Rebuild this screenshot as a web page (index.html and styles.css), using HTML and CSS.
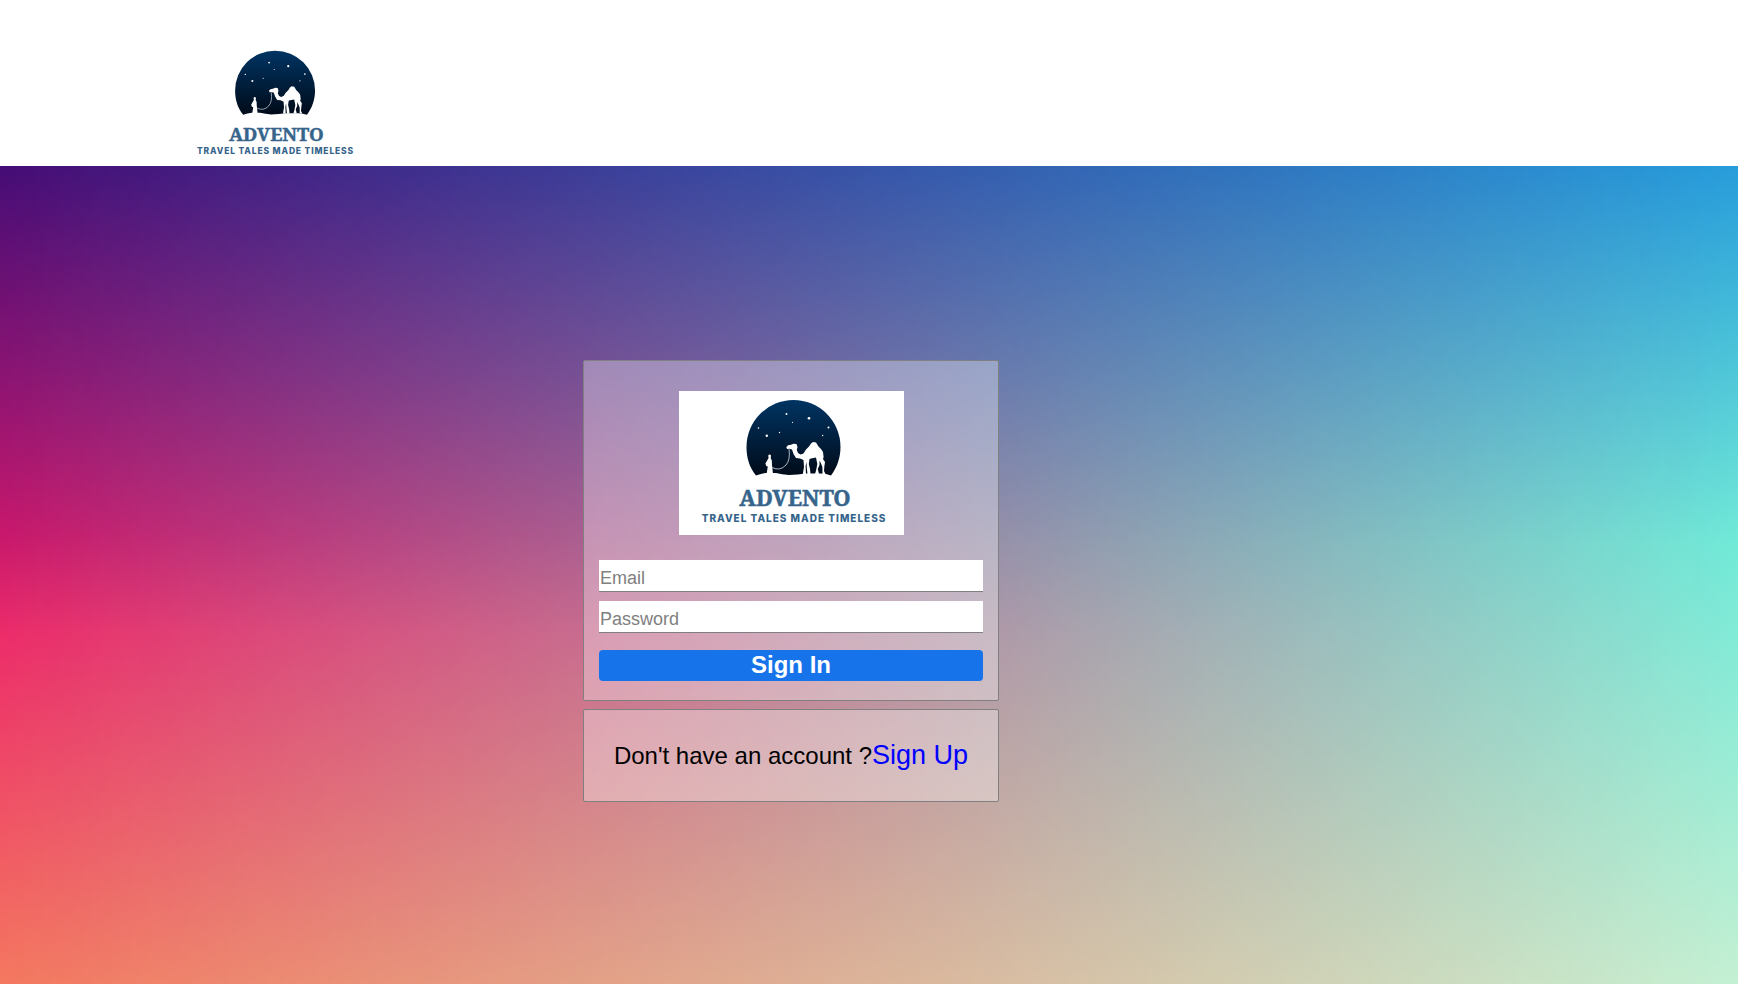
FILE: index.html
```
<!DOCTYPE html>
<html lang="en">
<head>
<meta charset="utf-8">
<meta name="viewport" content="width=device-width, initial-scale=1">
<title>Advento - Sign In</title>
<link rel="stylesheet" href="styles.css">
</head>
<body>
<svg class="defs" aria-hidden="true">
  <defs>
    <linearGradient id="night" x1="0" y1="0" x2="0" y2="1">
      <stop offset="0" stop-color="#003463"/>
      <stop offset="1" stop-color="#000b19"/>
    </linearGradient>
  </defs>
  <symbol id="advento-scene" viewBox="0 0 225 144">
    <path fill="url(#night)" d="M77 84.500C70 76 67.500 66 67.500 56a47 47 0 0 1 94 0C161.500 66 158.500 76 152 84.500Q147 82.500 142 82.500L127 82.500Q119 83.500 110 84Q103 83.500 97 82L87 82Q82 82.500 77 84.500Z"/>
    <g fill="#fff">
      <path d="M107.300 56.300L109 54.300L112 53.700L114.500 52.800L117.500 53L118.500 56L117.800 59L119 62L121.500 63.500L124.500 62.500L127 58.500L130 55.500L132 52.500L134 51L137 51.500L139.500 55.500L142 58L144 61L144.600 66L144 68L146 71L145.400 75L145 80L146.500 83L143.500 83L143.400 76L141.800 72L140.600 69.500L140.500 74L138.800 78L140 83L136 83L137.200 79L138.300 73L137 66.500L132 67.500L130.500 68L129.800 73L131 78L131.500 83L128.500 83L127.800 77L127.500 71L126.600 75L127 83L123.800 83L125 76L124.500 69L121 67.500L117 67L114.500 63L113 58.500L110.500 57.800L108 58Z"/>
      <path d="M89.200 64.500Q90.700 62.400 92 64.500L91.700 67L92.800 69.500L93 74L94 83H87.600L88.800 75.500L87.200 75L86.400 72.500L88 69.800L89.600 67Z"/>
      <circle cx="107.500" cy="23" r="1"/><circle cx="130" cy="27.300" r="1.300"/>
      <circle cx="113.500" cy="31.300" r=".6"/><circle cx="149.500" cy="36.500" r="1"/>
      <circle cx="79.500" cy="37" r=".8"/><circle cx="100.500" cy="41.500" r=".7"/>
      <circle cx="87.800" cy="44.800" r="1.200"/><circle cx="143.700" cy="44.500" r=".7"/>
    </g>
    <path fill="none" stroke="#d5dce4" stroke-width=".8" d="M110 58Q111.500 69 107 74Q101 80.500 93 76.500"/>
  </symbol>
</svg>
<header class="header">
  <svg class="header-logo" viewBox="18 4 194 132" role="img" aria-label="Advento">
    <use href="#advento-scene" width="225" height="144"/>
    <text class="logo-name" x="116" y="115">ADVENTO</text>
    <text class="logo-tagline" x="115" y="131">TRAVEL TALES MADE TIMELESS</text>
  </svg>
</header>
<main class="page">
  <div class="forms">
    <form class="card sign-in">
      <svg class="card-logo" viewBox="0 0 225 144" role="img" aria-label="Advento">
        <use href="#advento-scene" width="225" height="144"/>
        <text class="logo-name" x="116" y="115">ADVENTO</text>
        <text class="logo-tagline" x="115" y="131">TRAVEL TALES MADE TIMELESS</text>
      </svg>
      <input class="field" type="email" placeholder="Email" aria-label="Email">
      <input class="field" type="password" placeholder="Password" aria-label="Password">
      <button class="submit" type="submit">Sign In</button>
    </form>
    <p class="card sign-up">Don't have an account ?<a class="sign-up-link" href="#signup">Sign Up</a></p>
  </div>
</main>
</body>
</html>
```
FILE: styles.css
```
* { box-sizing: border-box; }
body {
  margin: 0;
  min-height: 100vh;
  display: flex;
  flex-direction: column;
  background: #fff;
  font-family: "Liberation Sans", Arial, sans-serif;
}
.defs { position: absolute; width: 0; height: 0; }
.logo-name, .logo-tagline { fill: #36648b; text-anchor: middle; }
.logo-name {
  font: bold 22px "Noto Serif", "DejaVu Serif", serif;
  stroke: #36648b;
  stroke-width: .5px;
}
.logo-tagline { font: 800 10px Inter, "Open Sans", sans-serif; letter-spacing: 1px; }
.header { padding: 46px 11.1% 7px; }
.header-logo { display: block; width: 165px; height: 113px; }
.page {
  position: relative;
  flex: 1;
  display: grid;
  grid-template-columns: 583fr minmax(auto, 416px) 739fr;
  align-content: start;
  padding: 194px 0 32px;
  background: linear-gradient(#460d76, #8d1472 26%, #c8186c 45%, #ec2c6a 57%, #f47860);
}
.page::before {
  content: "";
  position: absolute;
  inset: 0;
  background: linear-gradient(#279ddb, #70ead8 46%, #c4f0d3);
  mask-image: linear-gradient(90deg, transparent, #000);
}
.forms {
  grid-column: 2;
  position: relative;
  display: flex;
  flex-direction: column;
  gap: 8px;
}
.card {
  margin: 0;
  border: 1px solid #808080;
  border-radius: 2px;
  background: rgba(255, 255, 255, .33);
}
.sign-in {
  display: flex;
  flex-direction: column;
  padding: 30px 15px 19px;
}
.card-logo {
  align-self: center;
  width: 225px;
  height: 144px;
  margin-bottom: 25px;
  background: #fff;
}
.field {
  height: 32px;
  margin-bottom: 9px;
  padding: 5px 1px 0;
  border: 0;
  border-bottom: 1px solid #808080;
  background: #fff;
  font: 18px "Liberation Sans", Arial, sans-serif;
}
.field::placeholder { color: #808080; }
.submit {
  height: 31px;
  margin-top: 8px;
  padding: 0 0 2px;
  border: 0;
  border-radius: 4px;
  background: #1773ea;
  color: #fff;
  font: bold 24px "Liberation Sans", Arial, sans-serif;
}
.sign-up {
  padding: 28px 16px;
  text-align: center;
  font-size: 24px;
  line-height: 34px;
}
.sign-up-link { color: #00f; font-size: 27px; text-decoration: none; }
```
